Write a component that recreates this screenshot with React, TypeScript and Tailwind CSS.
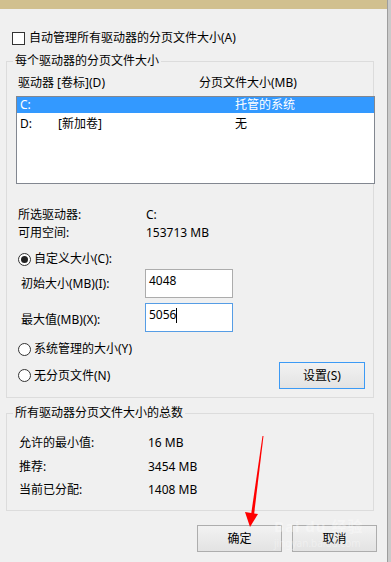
import React from 'react';

// 虚拟内存对话框（Windows 8 风格）
type Row = { label: string; value: string };

const totals: Row[] = [
  { label: '允许的最小值:', value: '16 MB' },
  { label: '推荐:', value: '3454 MB' },
  { label: '当前已分配:', value: '1408 MB' },
];

function Radio({ checked }: { checked?: boolean }) {
  return (
    <span className="w-[13px] h-[13px] rounded-full border border-[#333333] bg-white flex items-center justify-center shrink-0">
      {checked && <span className="w-[7px] h-[7px] rounded-full bg-[#222222]" />}
    </span>
  );
}

function GroupBox({ title, className, children }: { title: string; className?: string; children: React.ReactNode }) {
  return (
    <div className={`relative ml-[6px] w-[368px] border border-[#dcdcdc] ${className ?? ''}`}>
      <span className="absolute left-[6px] top-[-9px] px-[2px] bg-[#f0f0f0] leading-[16px]">{title}</span>
      {children}
    </div>
  );
}

export default function App() {
  return (
    <div className="w-[391px] h-[562px] bg-[#f0f0f0] flex overflow-hidden relative text-[12px] text-black font-['Noto_Sans','Noto_Sans_CJK_SC',sans-serif]">
      <div className="w-[387px] flex flex-col">
        <div className="h-[9px] bg-[#d1c08f]" />

        {/* 自动管理 */}
        <div className="mt-[22px] ml-[12px] flex items-center h-[14px]">
          <span className="w-[13px] h-[13px] border border-[#333333] bg-white shrink-0" />
          <span className="ml-[4px] leading-[16px]">自动管理所有驱动器的分页文件大小(A)</span>
        </div>

        <GroupBox title="每个驱动器的分页文件大小" className="mt-[16px] h-[337px]">
          <div className="mt-[13px] h-[16px] flex leading-[16px]">
            <span className="ml-[11px] w-[181px]">驱动器 [卷标](D)</span>
            <span>分页文件大小(MB)</span>
          </div>

          {/* 列表 */}
          <div className="mt-[5px] ml-[9px] w-[359px] h-[88px] border border-[#828790] bg-white">
            <div className="h-[16px] bg-[#3399ff] text-white flex leading-[16px]">
              <span className="ml-[3px] w-[215px]">C:</span>
              <span>托管的系统</span>
            </div>
            <div className="h-[22px] flex items-center leading-[16px]">
              <span className="ml-[3px] w-[38px]">D:</span>
              <span className="w-[177px]">[新加卷]</span>
              <span>无</span>
            </div>
          </div>

          <div className="mt-[23px] h-[16px] flex leading-[16px]">
            <span className="ml-[11px] w-[128px]">所选驱动器:</span>
            <span>C:</span>
          </div>
          <div className="mt-[2px] h-[16px] flex leading-[16px]">
            <span className="ml-[11px] w-[128px]">可用空间:</span>
            <span>153713 MB</span>
          </div>

          <div className="mt-[10px] h-[16px] ml-[11px] flex items-center gap-[3px] leading-[16px]">
            <Radio checked />
            <span>自定义大小(C):</span>
          </div>

          <div className="mt-[2px] h-[29px] flex items-center leading-[16px]">
            <span className="ml-[14px] w-[124px]">初始大小(MB)(I):</span>
            <div className="w-[88px] h-[29px] border border-[#acacac] bg-white pl-[3px] pt-[3px]">4048</div>
          </div>
          <div className="mt-[5px] h-[29px] flex items-center leading-[16px]">
            <span className="ml-[14px] w-[124px] pt-[5px]">最大值(MB)(X):</span>
            <div className="w-[88px] h-[29px] border border-[#569de5] bg-white pl-[3px] pt-[3px] flex items-start">
              <span>5056</span>
              <span className="w-px h-[15px] bg-black mt-[1px]" />
            </div>
          </div>

          <div className="mt-[9px] h-[16px] ml-[11px] flex items-center gap-[3px] leading-[16px]">
            <Radio />
            <span>系统管理的大小(Y)</span>
          </div>

          <div className="mt-[5px] h-[27px] flex items-center leading-[16px]">
            <div className="ml-[11px] w-[261px] flex items-center gap-[3px]">
              <Radio />
              <span>无分页文件(N)</span>
            </div>
            <button className="w-[86px] h-[27px] border border-[#3c9af5] bg-gradient-to-b from-[#f2f2f2] to-[#e3e3e3]">
              设置(S)
            </button>
          </div>
        </GroupBox>

        <GroupBox title="所有驱动器分页文件大小的总数" className="mt-[15px] h-[98px]">
          <div className="mt-[21px] flex flex-col gap-[7.5px]">
            {totals.map((r) => (
              <div key={r.label} className="h-[16px] flex leading-[16px]">
                <span className="ml-[12px] w-[129px]">{r.label}</span>
                <span>{r.value}</span>
              </div>
            ))}
          </div>
        </GroupBox>

        <div className="mt-[14px] ml-[197px] flex gap-[10px]">
          <button className="w-[85px] h-[27px] border border-[#adadad] bg-gradient-to-b from-[#f2f2f2] to-[#e3e3e3] leading-[16px]">
            确定
          </button>
          <button className="w-[85px] h-[27px] border border-[#adadad] bg-gradient-to-b from-[#f2f2f2] to-[#e3e3e3] leading-[16px]">
            取消
          </button>
        </div>
      </div>

      {/* 右侧边框 */}
      <div className="w-[4px] border-l border-[#9d9d9d] bg-[#cacaca]" />

      {/* 水印（很淡） */}
      <div className="absolute left-[274px] top-[519px] text-white/35 pointer-events-none leading-none" aria-hidden="true">
        <div className="text-[15px] font-bold tracking-[1px]">Bai du 经验</div>
        <div className="text-[10px] mt-[4px]">jingyan.baidu.com</div>
      </div>

      {/* 红色箭头 */}
      <svg className="absolute left-0 top-0 pointer-events-none" width="391" height="562" viewBox="0 0 391 562">
        <polygon points="262.5,436 263.5,436 254,515 251,515" fill="#ff0000" />
        <polygon points="245,512 258,514 250,527" fill="#ff0000" />
      </svg>
    </div>
  );
}
